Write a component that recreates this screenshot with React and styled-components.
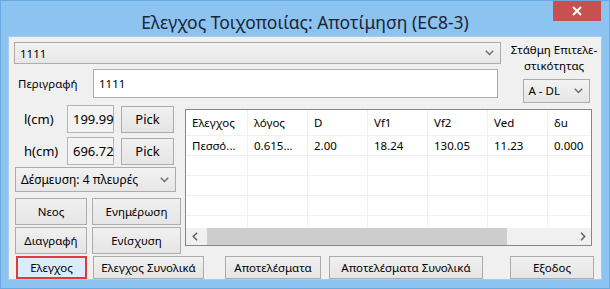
import React from 'react'
import styled, { createGlobalStyle } from 'styled-components'

const GlobalStyle = createGlobalStyle`
  html, body {
    margin: 0;
    padding: 0;
    background: #ffffff;
  }
  body {
    font-family: "Noto Sans", "Liberation Sans", sans-serif;
    font-size: 11.5px;
    color: #000;
  }
`

const Window = styled.div`
  width: 610px;
  height: 289px;
  box-sizing: border-box;
  background: #8cc3f1;
  border: 1px solid #6aa8df;
  display: flex;
  flex-direction: column;
`

const TitleBar = styled.div`
  height: 36px;
  display: grid;
  grid-template-columns: 1fr auto 1fr;
  align-items: start;
`

const Title = styled.div`
  grid-column: 2;
  padding-top: 9px;
  font-size: 17.5px;
  color: #1d2530;
  white-space: nowrap;
`

const CloseButton = styled.div`
  grid-column: 3;
  justify-self: end;
  margin-right: 8px;
  width: 48px;
  height: 20px;
  background: #c75050;
  display: flex;
  align-items: center;
  justify-content: center;
`

const Client = styled.div`
  flex: 1;
  margin: 0 7px 8px 7px;
  background: #f0f0f0;
  border: 1px solid #a9cbe9;
  padding: 5px 0 0 5px;
  display: flex;
  flex-direction: column;
`

const TopSection = styled.div`
  display: flex;
`

const TopLeft = styled.div`
  width: 487px;
  display: flex;
  flex-direction: column;
  gap: 5px;
`

const TopRight = styled.div`
  width: 96px;
  margin-left: 6px;
  display: flex;
  flex-direction: column;
  align-items: center;
  line-height: 16px;
  padding-top: 0;
  text-align: center;
  white-space: nowrap;
`

const Combo = styled.div`
  box-sizing: border-box;
  width: ${p => p.$w}px;
  height: ${p => p.$h || 22}px;
  margin-top: ${p => p.$mt || 0}px;
  margin-left: ${p => p.$ml || 0}px;
  border: 1px solid #acacac;
  background: linear-gradient(#f2f2f2, #e6e6e6);
  display: flex;
  align-items: center;
  padding: 0 6px 0 5px;
  justify-content: space-between;
  white-space: nowrap;
  font-size: ${p => p.$fs || 11.5}px;
`

const Chevron = () => (
  <svg width="9" height="6" viewBox="0 0 9 6">
    <polyline points="0.8,0.8 4.5,4.5 8.2,0.8" fill="none" stroke="#6d6d6d" strokeWidth="1.5" />
  </svg>
)

const FieldRow = styled.div`
  display: flex;
  align-items: center;
`

const Label = styled.div`
  width: ${p => p.$w}px;
  padding-left: ${p => p.$pl || 0}px;
  box-sizing: border-box;
  white-space: nowrap;
  font-size: ${p => p.$fs || 11.5}px;
`

const TextBox = styled.div`
  box-sizing: border-box;
  width: ${p => p.$w}px;
  height: ${p => p.$h}px;
  border: 1px solid ${p => (p.$readOnly ? '#b5b5b5' : '#abadb3')};
  background: ${p => (p.$readOnly ? '#f3f3f3' : '#fff')};
  display: flex;
  align-items: center;
  padding-left: ${p => p.$pl || 5}px;
  font-size: ${p => p.$fs || 11.5}px;
`

const Button = styled.div`
  box-sizing: border-box;
  width: ${p => p.$w}px;
  height: ${p => p.$h || 27}px;
  margin-left: ${p => p.$ml || 0}px;
  border: ${p => (p.$active ? '2px solid #dc3b3f' : '1px solid #acacac')};
  background: ${p => (p.$active ? '#dcecfc' : 'linear-gradient(#f0f0f0, #e5e5e5)')};
  display: flex;
  align-items: center;
  justify-content: center;
  white-space: nowrap;
  font-size: ${p => p.$fs || 11.5}px;
`

const Middle = styled.div`
  display: flex;
  margin-top: 2px;
`

const LeftPanel = styled.div`
  width: 171px;
  display: flex;
  flex-direction: column;
`

const PickRow = styled.div`
  display: flex;
  align-items: center;
  height: 28px;
  margin-bottom: ${p => p.$mb || 0}px;
`

const ButtonRow = styled.div`
  display: flex;
  margin-top: ${p => p.$mt || 0}px;
  padding-left: 1px;
`

const GridBox = styled.div`
  box-sizing: border-box;
  width: 407px;
  height: 137px;
  margin-top: 4px;
  border: 1px solid #828790;
  background: #fff;
  display: flex;
  flex-direction: column;
  overflow: hidden;
`

const Viewport = styled.div`
  flex: 1;
  overflow: hidden;
`

const GridRow = styled.div`
  display: grid;
  grid-template-columns: 62px repeat(6, 60px);
  height: ${p => (p.$header ? 26 : 20)}px;
  border-bottom: 1px solid #f0f0f0;
  box-sizing: border-box;
`

const Cell = styled.div`
  border-right: 1px solid #f0f0f0;
  padding-left: 6px;
  display: flex;
  align-items: center;
  white-space: nowrap;
  overflow: hidden;
`

const ScrollBar = styled.div`
  height: 17px;
  background: #f0f0f0;
  display: flex;
  align-items: center;
`

const ScrollArrow = styled.div`
  width: 17px;
  height: 17px;
  display: flex;
  align-items: center;
  justify-content: center;
`

const ScrollTrack = styled.div`
  flex: 1;
  height: 100%;
  padding: 0 4px 0 4px;
  display: flex;
  align-items: center;
`

const Thumb = styled.div`
  height: 100%;
  background: #cdcdcd;
`

const BottomBar = styled.div`
  display: flex;
  margin-top: 2px;
  padding-left: 2px;
`

const Arrow = ({ dir }) => (
  <svg width="6" height="9" viewBox="0 0 6 9">
    <polyline
      points={dir === 'left' ? '5,0.8 1.3,4.5 5,8.2' : '1,0.8 4.7,4.5 1,8.2'}
      fill="none"
      stroke="#606060"
      strokeWidth="1.5"
    />
  </svg>
)

const columns = ['Ελεγχος', 'λόγος', 'D', 'Vf1', 'Vf2', 'Ved', 'δu']
const rows = [['Πεσσό...', '0.615...', '2.00', '18.24', '130.05', '11.23', '0.000']]
const emptyRows = 5

const App = () => {
  return (
    <>
      <GlobalStyle />
      <Window>
        <TitleBar>
          <Title>Ελεγχος Τοιχοποιίας: Αποτίμηση (EC8-3)</Title>
          <CloseButton>
            <svg width="10" height="10" viewBox="0 0 10 10">
              <path d="M1 1 L9 9 M9 1 L1 9" stroke="#fff" strokeWidth="2" />
            </svg>
          </CloseButton>
        </TitleBar>
        <Client>
          <TopSection>
            <TopLeft>
              <Combo $w={487}>
                <span>1111</span>
                <Chevron />
              </Combo>
              <FieldRow>
                <Label $w={79} $pl={4}>Περιγραφή</Label>
                <TextBox $w={405} $h={29}>1111</TextBox>
              </FieldRow>
            </TopLeft>
            <TopRight>
              <div>Στάθμη Επιτελε-</div>
              <div>στικότητας</div>
              <Combo $w={67} $h={24} $mt={5} $ml={4}>
                <span>A - DL</span>
                <Chevron />
              </Combo>
            </TopRight>
          </TopSection>
          <Middle>
            <LeftPanel>
              <PickRow $mb={4}>
                <Label $w={53} $pl={10} $fs={13}>l(cm)</Label>
                <TextBox $w={47} $h={28} $fs={13} $readOnly>199.99</TextBox>
                <Button $w={53} $ml={7} $fs={13}>Pick</Button>
              </PickRow>
              <PickRow>
                <Label $w={53} $pl={10} $fs={13}>h(cm)</Label>
                <TextBox $w={47} $h={28} $fs={13} $readOnly>696.72</TextBox>
                <Button $w={53} $ml={7} $fs={13}>Pick</Button>
              </PickRow>
              <Combo $w={161} $h={25} $mt={2} $ml={1} $fs={12}>
                <span>Δέσμευση: 4 πλευρές</span>
                <Chevron />
              </Combo>
              <ButtonRow $mt={6}>
                <Button $w={72}>Νεος</Button>
                <Button $w={89} $ml={5}>Ενημέρωση</Button>
              </ButtonRow>
              <ButtonRow $mt={2}>
                <Button $w={72}>Διαγραφή</Button>
                <Button $w={89} $ml={5}>Ενίσχυση</Button>
              </ButtonRow>
            </LeftPanel>
            <GridBox>
              <Viewport>
                <GridRow $header>
                  {columns.map(c => (
                    <Cell key={c}>{c}</Cell>
                  ))}
                </GridRow>
                {rows.map((r, i) => (
                  <GridRow key={i}>
                    {r.map((v, j) => (
                      <Cell key={j}>{v}</Cell>
                    ))}
                  </GridRow>
                ))}
                {Array.from({ length: emptyRows }).map((_, i) => (
                  <GridRow key={'e' + i}>
                    {columns.map(c => (
                      <Cell key={c} />
                    ))}
                  </GridRow>
                ))}
              </Viewport>
              <ScrollBar>
                <ScrollArrow>
                  <Arrow dir="left" />
                </ScrollArrow>
                <ScrollTrack>
                  <Thumb style={{ width: '300px' }} />
                </ScrollTrack>
                <ScrollArrow>
                  <Arrow dir="right" />
                </ScrollArrow>
              </ScrollBar>
            </GridBox>
          </Middle>
          <BottomBar>
            <Button $w={71} $h={23} $active>Ελεγχος</Button>
            <Button $w={111} $h={23} $ml={6}>Ελεγχος Συνολικά</Button>
            <Button $w={96} $h={23} $ml={21}>Αποτελέσματα</Button>
            <Button $w={154} $h={23} $ml={8}>Αποτελέσματα Συνολικά</Button>
            <Button $w={84} $h={23} $ml={27}>Εξοδος</Button>
          </BottomBar>
        </Client>
      </Window>
    </>
  )
}

export default App
